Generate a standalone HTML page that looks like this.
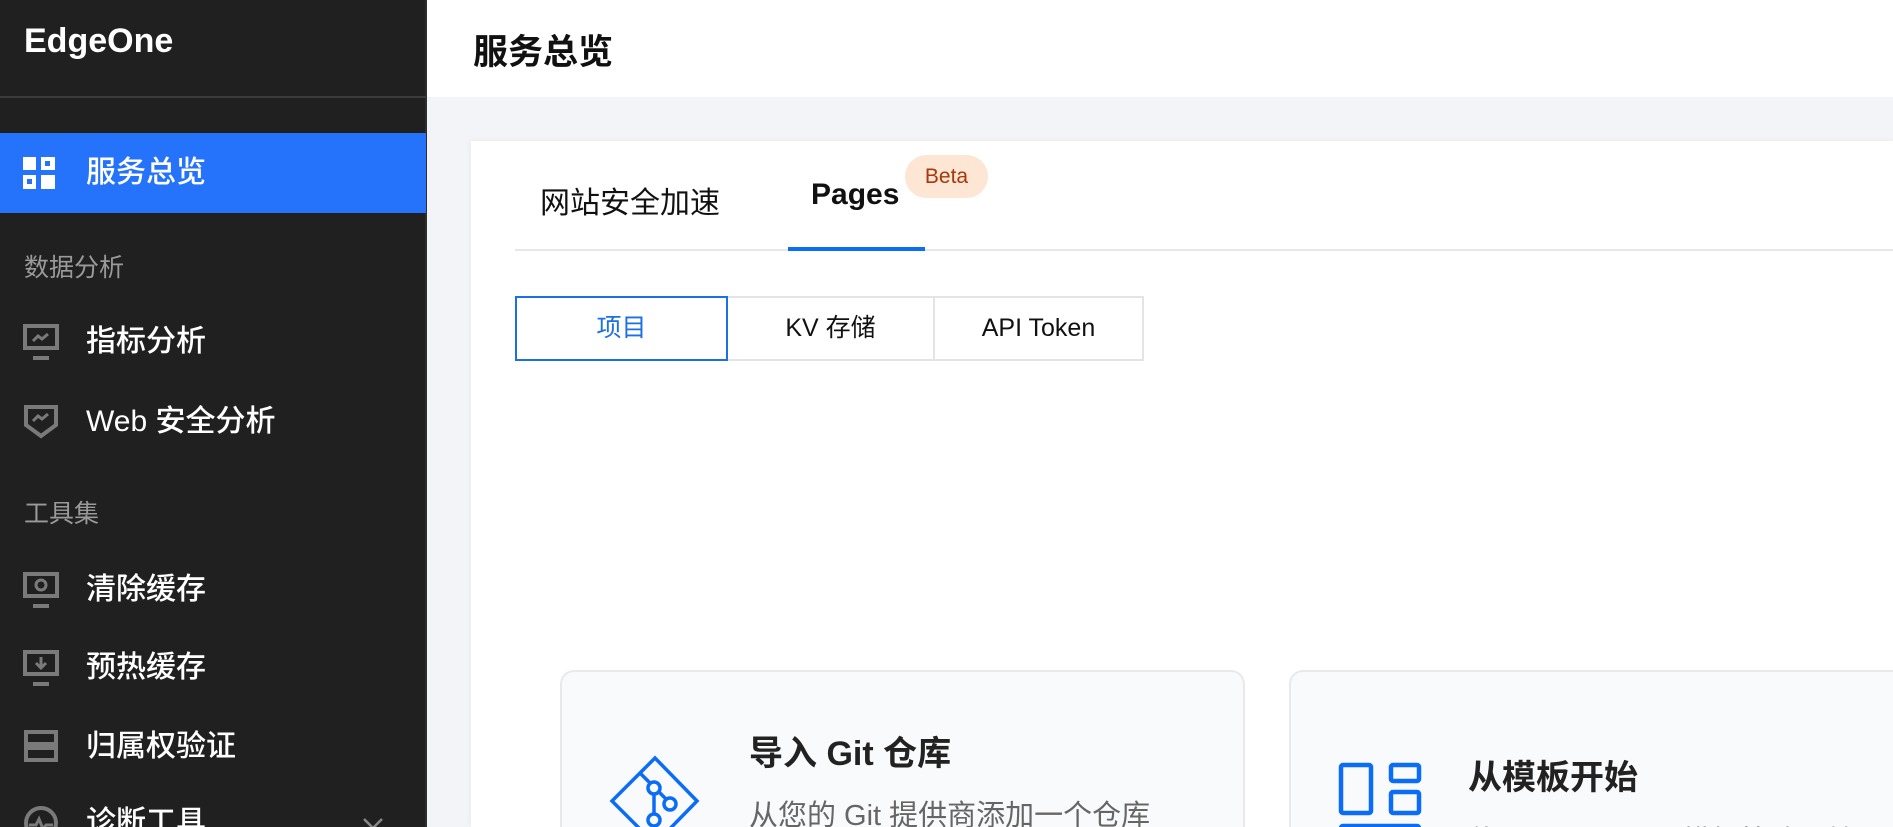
<!DOCTYPE html>
<html><head><meta charset="utf-8"><style>
*{margin:0;padding:0;box-sizing:border-box}
html,body{width:1893px;height:827px;overflow:hidden}
body{position:relative;background:#f3f4f8;font-family:"Liberation Sans","Noto Sans CJK SC",sans-serif}
.sb{position:absolute;left:0;top:0;width:427px;height:827px;background:#202021;border-right:2px solid #2e2e2e}
.logo{position:absolute;left:24px;top:22px;color:#fff;font-size:34px;font-weight:bold}
.hl{position:absolute;left:0;top:96px;width:426px;height:2px;background:#3b3b3b}
.it{position:absolute;left:0;width:426px;height:56px;color:#fff;font-size:30px;line-height:56px;font-weight:500}
.it span{position:absolute;left:86px}
.it svg{position:absolute;left:23px;top:10px}
.act{background:#2473fa;height:80px;top:133px;line-height:80px}
.act svg{top:24px}
.sec{position:absolute;left:24px;color:#9a9a9a;font-size:25px}
.hdr{position:absolute;left:427px;top:0;right:0;height:97px;background:#fff}
.ttl{position:absolute;left:473px;top:24px;font-size:35px;font-weight:bold;color:#111}
.card{position:absolute;left:471px;top:141px;right:0;bottom:0;background:#fff;box-shadow:0 0 6px rgba(0,0,0,.05)}
.tab{position:absolute;top:178px;font-size:30px;color:#111}
.beta{position:absolute;left:905px;top:155px;width:83px;height:43px;border-radius:22px;background:#fde6d4;color:#a8370a;font-size:21px;text-align:center;line-height:43px}
.tl{position:absolute;left:515px;top:249px;right:0;height:2px;background:#e6e7ea}
.ta{position:absolute;left:788px;top:247px;width:137px;height:4px;background:#0b6cf5}
.seg{position:absolute;top:296px;height:65px;border:2px solid #e3e4e7;font-size:25px;color:#111;text-align:center;line-height:61px}
.pc{position:absolute;top:670px;height:157px;border:2px solid #e8e9ec;border-bottom:none;border-radius:14px 14px 0 0;background:#f9fafc}
.pt{position:absolute;font-size:34px;color:#222;font-weight:bold}
.ps{position:absolute;font-size:29px;color:#666}
</style></head><body>
<div class="sb">
<div class="logo">EdgeOne</div>
<div class="hl"></div>
<div class="it act"><svg width="32" height="32" viewBox="0 0 32 32" fill="#fff"><rect x="0" y="0" width="13" height="13"/><path fill-rule="evenodd" d="M18 0h14v13H18zM22 4v5h5V4z"/><path fill-rule="evenodd" d="M0 18h13v14H0zM4 22v5h5v-5z"/><rect x="18" y="18" width="14" height="14"/></svg><span>服务总览</span></div>
<div class="sec" style="top:248px">数据分析</div>
<div class="it" style="top:314px"><svg width="36" height="36" viewBox="0 0 36 36" fill="none" stroke="#7a7a7a" stroke-width="4"><rect x="2" y="2" width="32" height="22"/><path d="M10 34h16" /><path d="M10 17l5-5 4 3 6-5" stroke-width="3"/></svg><span>指标分析</span></div>
<div class="it" style="top:394px"><svg width="36" height="36" viewBox="0 0 36 36" fill="none" stroke="#7a7a7a" stroke-width="4"><path d="M3 3h30v18l-15 11L3 21z"/><path d="M10 17l5-5 4 3 6-5" stroke-width="3"/></svg><span>Web 安全分析</span></div>
<div class="sec" style="top:494px">工具集</div>
<div class="it" style="top:562px"><svg width="36" height="36" viewBox="0 0 36 36" fill="none" stroke="#7a7a7a" stroke-width="4"><rect x="2" y="2" width="32" height="22"/><path d="M10 34h16"/><circle cx="18" cy="13" r="5" stroke-width="3"/></svg><span>清除缓存</span></div>
<div class="it" style="top:640px"><svg width="36" height="36" viewBox="0 0 36 36" fill="none" stroke="#7a7a7a" stroke-width="4"><rect x="2" y="2" width="32" height="22"/><path d="M10 34h16"/><path d="M18 7v10M13 13l5 5 5-5" stroke-width="3"/></svg><span>预热缓存</span></div>
<div class="it" style="top:719px"><svg width="36" height="36" viewBox="0 0 36 36" fill="none" stroke="#7a7a7a" stroke-width="4"><rect x="3" y="3" width="30" height="12"/><rect x="3" y="19" width="30" height="12"/></svg><span>归属权验证</span></div>
<div class="it" style="top:795px"><svg width="36" height="36" viewBox="0 0 36 36" fill="none" stroke="#7a7a7a" stroke-width="4"><circle cx="18" cy="18" r="15"/><path d="M6 20h7l3-6 4 10 3-4h7" stroke-width="3"/></svg><span>诊断工具</span><svg style="left:362px;top:22px" width="22" height="14" viewBox="0 0 22 14" fill="none" stroke="#888" stroke-width="2.5"><path d="M2 2l9 9 9-9"/></svg></div>
</div>
<div class="hdr"></div>
<div class="ttl">服务总览</div>
<div class="card"></div>
<div class="tab" style="left:540px">网站安全加速</div>
<div class="tab" style="left:811px;font-weight:bold">Pages</div>
<div class="beta">Beta</div>
<div class="tl"></div><div class="ta"></div>
<div class="seg" style="left:515px;width:213px;border-color:#1d6fe6;color:#1d6fe6;z-index:2">项目</div>
<div class="seg" style="left:726px;width:209px">KV 存储</div>
<div class="seg" style="left:933px;width:211px">API Token</div>
<div class="pc" style="left:560px;width:685px"></div>
<div class="pc" style="left:1289px;width:700px"></div>
<svg style="position:absolute;left:608px;top:755px" width="95" height="72" viewBox="608 755 95 72" fill="none" stroke="#0b6cf5" stroke-width="3.5"><path d="M655 758L697 801L655 844L612 801Z"/><path d="M640 773L650 783M654 793V814M659 792L666 799"/><circle cx="654" cy="788" r="6"/><circle cx="670" cy="804" r="6"/><circle cx="654" cy="820" r="6"/></svg>
<div class="pt" style="left:749px;top:726px">导入 Git 仓库</div>
<div class="ps" style="left:749px;top:792px">从您的 Git 提供商添加一个仓库</div>
<svg style="position:absolute;left:1338px;top:762px" width="84" height="65" viewBox="0 0 84 65" fill="none" stroke="#0b6cf5" stroke-width="4.5"><rect x="3" y="3" width="30" height="48" rx="2"/><rect x="53" y="3" width="28" height="16" rx="2"/><rect x="53" y="30" width="28" height="21" rx="2"/><rect x="3" y="64" width="78" height="20" rx="2"/></svg>
<div class="pt" style="left:1468px;top:750px">从模板开始</div>
<div class="ps" style="left:1468px;top:818px">使用 Pages 预置模板快速开始</div>
</body></html>
